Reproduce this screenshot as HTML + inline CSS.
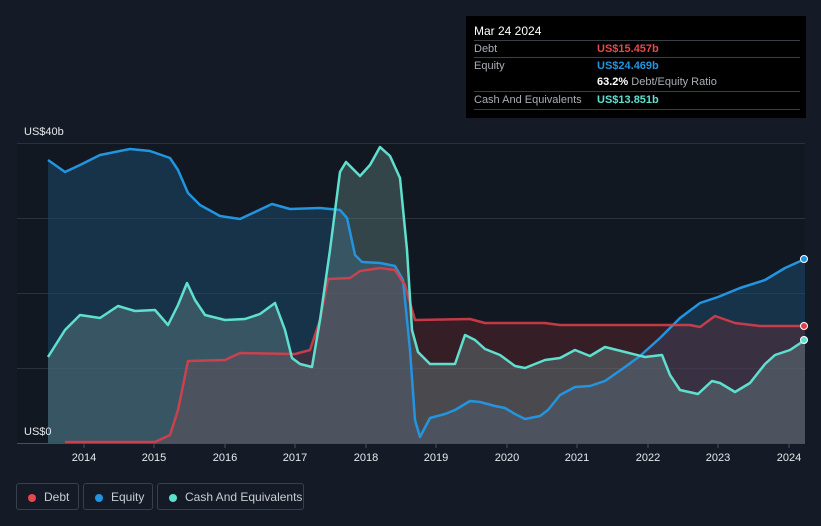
<!DOCTYPE html>
<html><head><style>
body{margin:0;width:821px;height:526px;background:#151b26;font-family:"Liberation Sans",sans-serif;overflow:hidden;position:relative}
.tt{position:absolute;left:466px;top:16px;width:340px;height:102px;background:#000;color:#fff;font-size:11px}
.tt .h{position:absolute;left:8px;top:8px;font-size:12px}
.row{position:absolute;left:8px;width:326px;border-top:1px solid #3a3f47;height:17px;line-height:17px;color:#a9aeb5}
.row span{position:absolute;left:123px}
.leg{position:absolute;top:483px;height:27px;border:1px solid #3a404b;border-radius:3px;color:#c9ccd1;font-size:12px;line-height:27px;box-sizing:border-box}
.leg i{position:absolute;top:10px;left:11px;width:8px;height:8px;border-radius:50%}
.leg b{font-weight:normal;position:absolute;left:27px}
</style></head><body>
<svg width="821" height="526" style="position:absolute;left:0;top:0">
<rect x="17" y="143" width="788" height="300" fill="#121821"/>
<g stroke="#2b323c" stroke-width="1">
<line x1="17" y1="143.5" x2="805" y2="143.5"/><line x1="17" y1="218.5" x2="805" y2="218.5"/><line x1="17" y1="293.5" x2="805" y2="293.5"/><line x1="17" y1="368.5" x2="805" y2="368.5"/>
</g>
<path id="eq" d="M48,160 L65,172 80,165 100,155 130,149 150,151 170,158 178,170 188,193 200,205 220,216 240,219 255,212 272,204 290,209 320,208 340,210 347,218 355,255 362,262 380,263 395,266 403,280 410,350 415,420 420,437 430,418 445,414 455,410 470,401 480,402 495,406 505,408 515,414 525,419 540,416 548,410 560,395 575,387 590,386 605,381 625,367 640,356 660,338 680,318 700,303 718,297 740,288 765,280 785,268 805,259" fill="none"/>
<path d="M48,160 L65,172 80,165 100,155 130,149 150,151 170,158 178,170 188,193 200,205 220,216 240,219 255,212 272,204 290,209 320,208 340,210 347,218 355,255 362,262 380,263 395,266 403,280 410,350 415,420 420,437 430,418 445,414 455,410 470,401 480,402 495,406 505,408 515,414 525,419 540,416 548,410 560,395 575,387 590,386 605,381 625,367 640,356 660,338 680,318 700,303 718,297 740,288 765,280 785,268 805,259 L805,443 48,443Z" fill="#1a4a6e" fill-opacity="0.55"/>
<path d="M65,442 L155,442 170,435 178,410 188,361 225,360 240,353 295,354 310,350 320,320 328,279 350,278 360,271 380,268 395,270 405,285 415,320 470,319 485,323 545,323 560,325 690,325 700,327 715,316 735,323 760,326 805,326 L805,443 65,443Z" fill="#7a2a35" fill-opacity="0.35"/>
<path d="M48,357 L65,330 80,315 100,318 118,306 135,311 155,310 168,325 178,305 187,283 195,300 205,315 225,320 245,319 260,314 275,303 285,330 292,358 300,364 312,367 320,320 330,250 340,172 346,162 360,176 370,165 380,147 390,156 400,178 407,250 412,330 418,352 430,364 455,364 465,335 475,340 485,349 500,355 515,366 525,368 545,360 560,358 575,350 590,356 605,347 625,352 645,357 662,355 670,375 680,390 698,394 712,381 720,383 735,392 750,383 765,364 775,355 790,350 805,340 L805,443 48,443Z" fill="#6a8a8a" fill-opacity="0.4"/>
<path d="M48,160 L65,172 80,165 100,155 130,149 150,151 170,158 178,170 188,193 200,205 220,216 240,219 255,212 272,204 290,209 320,208 340,210 347,218 355,255 362,262 380,263 395,266 403,280 410,350 415,420 420,437 430,418 445,414 455,410 470,401 480,402 495,406 505,408 515,414 525,419 540,416 548,410 560,395 575,387 590,386 605,381 625,367 640,356 660,338 680,318 700,303 718,297 740,288 765,280 785,268 805,259" fill="none" stroke="#2394df" stroke-width="2.5" stroke-linejoin="round"/>
<path d="M65,442 L155,442 170,435 178,410 188,361 225,360 240,353 295,354 310,350 320,320 328,279 350,278 360,271 380,268 395,270 405,285 415,320 470,319 485,323 545,323 560,325 690,325 700,327 715,316 735,323 760,326 805,326" fill="none" stroke="#e0404a" stroke-width="2.5" stroke-opacity="0.85" stroke-linejoin="round"/>
<path d="M48,357 L65,330 80,315 100,318 118,306 135,311 155,310 168,325 178,305 187,283 195,300 205,315 225,320 245,319 260,314 275,303 285,330 292,358 300,364 312,367 320,320 330,250 340,172 346,162 360,176 370,165 380,147 390,156 400,178 407,250 412,330 418,352 430,364 455,364 465,335 475,340 485,349 500,355 515,366 525,368 545,360 560,358 575,350 590,356 605,347 625,352 645,357 662,355 670,375 680,390 698,394 712,381 720,383 735,392 750,383 765,364 775,355 790,350 805,340" fill="none" stroke="#5fe0cf" stroke-width="2.5" stroke-linejoin="round"/>
<circle cx="804" cy="259" r="3.5" fill="#2394df" stroke="#fff" stroke-width="1"/>
<circle cx="804" cy="326" r="3.5" fill="#e0404a" stroke="#fff" stroke-width="1"/>
<circle cx="804" cy="340" r="3.5" fill="#5fe0cf" stroke="#fff" stroke-width="1"/>
<line x1="17" y1="443.5" x2="805" y2="443.5" stroke="#4a505a"/>
<g stroke="#4a505a"><line x1="84" y1="443" x2="84" y2="448"/><line x1="154" y1="443" x2="154" y2="448"/><line x1="225" y1="443" x2="225" y2="448"/><line x1="295" y1="443" x2="295" y2="448"/><line x1="366" y1="443" x2="366" y2="448"/><line x1="436" y1="443" x2="436" y2="448"/><line x1="507" y1="443" x2="507" y2="448"/><line x1="577" y1="443" x2="577" y2="448"/><line x1="648" y1="443" x2="648" y2="448"/><line x1="718" y1="443" x2="718" y2="448"/><line x1="789" y1="443" x2="789" y2="448"/></g>
<g fill="#e6e8eb" font-size="11" text-anchor="middle" font-family="Liberation Sans">
<text x="84" y="461">2014</text><text x="154" y="461">2015</text><text x="225" y="461">2016</text><text x="295" y="461">2017</text><text x="366" y="461">2018</text><text x="436" y="461">2019</text><text x="507" y="461">2020</text><text x="577" y="461">2021</text><text x="648" y="461">2022</text><text x="718" y="461">2023</text><text x="789" y="461">2024</text>
</g>
<text x="24" y="135" fill="#e6e8eb" font-size="11" font-family="Liberation Sans">US$40b</text>
<text x="24" y="435" fill="#e6e8eb" font-size="11" font-family="Liberation Sans">US$0</text>
</svg>
<div class="tt">
<div class="h">Mar 24 2024</div>
<div class="row" style="top:24px">Debt<span style="color:#e5484d;font-weight:bold">US$15.457b</span></div>
<div class="row" style="top:41px">Equity<span style="color:#2394df;font-weight:bold">US$24.469b</span></div>
<div class="row" style="top:58px;border-top:none"><span><b style="color:#fff">63.2%</b> Debt/Equity Ratio</span></div>
<div class="row" style="top:75px">Cash And Equivalents<span style="color:#5fe0cf;font-weight:bold">US$13.851b</span></div>
<div class="row" style="top:93px;height:0"></div>
</div>
<div class="leg" style="left:16px;width:63px"><i style="background:#e5484d"></i><b>Debt</b></div>
<div class="leg" style="left:83px;width:70px"><i style="background:#2394df"></i><b>Equity</b></div>
<div class="leg" style="left:157px;width:147px"><i style="background:#5fe0cf"></i><b>Cash And Equivalents</b></div>
</body></html>
